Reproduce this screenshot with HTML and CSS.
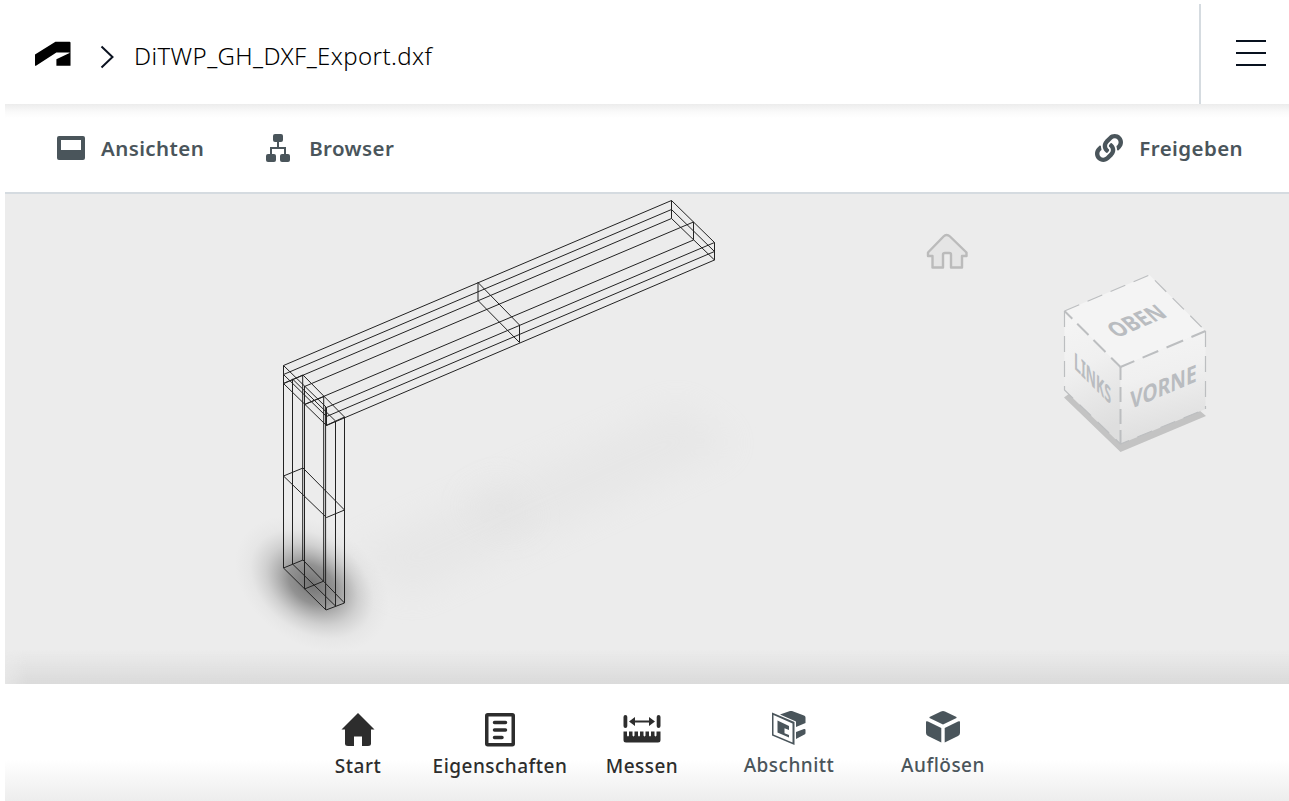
FILE: index.html
```html
<!DOCTYPE html>
<html lang="de">
<head>
<meta charset="utf-8">
<title>DiTWP_GH_DXF_Export.dxf</title>
<link rel="stylesheet" href="styles.css">
</head>
<body>
<div class="app">
  <header class="header">
    <svg class="logo" width="36" height="26" viewBox="0 0 37 26"><path d="M0 25V13.500L21 .5H35.500Q36.500 .5 36.500 1.500V25H22V18.500L35.500 12V11.500H22L1 25Z"/></svg>
    <svg class="chevron" width="14" height="24" viewBox="0 0 14 24"><path d="M1.500 1.500L12.500 12L1.500 22.500"/></svg>
    <h1 class="title">DiTWP_GH_DXF_Export.dxf</h1>
    <button class="menu" aria-label="Menü"><span class="bar"></span><span class="bar"></span><span class="bar"></span></button>
  </header>

  <nav class="toolbar">
    <button class="tool views">
      <svg width="28" height="24" viewBox="0 0 28 24"><path fill-rule="evenodd" d="M2 0H26Q28 0 28 2V22Q28 24 26 24H2Q0 24 0 22V2Q0 0 2 0ZM4 4V14H24V4Z"/></svg>
      <span>Ansichten</span>
    </button>
    <button class="tool browser">
      <svg width="24" height="28" viewBox="0 0 24 28"><rect x="7" y="0" width="10" height="8" rx="2"/><rect x="0" y="20" width="10" height="8" rx="2"/><rect x="14" y="20" width="10" height="8" rx="2"/><path class="wire" d="M12 8V14M5 21V14H19V21"/></svg>
      <span>Browser</span>
    </button>
    <button class="tool share">
      <svg width="28" height="28" viewBox="0 0 512 512"><path d="M326.612 185.391c59.747 59.809 58.927 155.698.36 214.590-.110.120-.240.250-.360.370l-67.200 67.200c-59.270 59.270-155.699 59.262-214.960 0-59.270-59.260-59.270-155.700 0-214.960l37.106-37.106c9.840-9.840 26.786-3.300 27.294 10.606.648 17.722 3.826 35.527 9.690 52.721 1.986 5.822.567 12.262-3.783 16.612l-13.087 13.087c-28.026 28.026-28.905 73.660-1.155 101.960 28.024 28.579 74.086 28.749 102.325.510l67.200-67.190c28.191-28.191 28.073-73.757 0-101.830-3.701-3.694-7.429-6.564-10.341-8.569a16.037 16.037 0 0 1-6.947-12.606c-.396-10.567 3.348-21.456 11.698-29.806l21.054-21.055c5.521-5.521 14.182-6.199 20.584-1.731a152.482 152.482 0 0 1 20.522 17.197zM467.547 44.449c-59.261-59.262-155.690-59.270-214.960 0l-67.200 67.200c-.120.120-.250.250-.360.370-58.566 58.892-59.387 154.781.360 214.590a152.454 152.454 0 0 0 20.521 17.196c6.402 4.468 15.064 3.789 20.584-1.731l21.054-21.055c8.350-8.350 12.094-19.239 11.698-29.806a16.037 16.037 0 0 0-6.947-12.606c-2.912-2.005-6.640-4.875-10.341-8.569-28.073-28.073-28.191-73.639 0-101.830l67.200-67.190c28.239-28.239 74.300-28.069 102.325.510 27.750 28.300 26.872 73.934-1.155 101.960l-13.087 13.087c-4.350 4.350-5.769 10.790-3.783 16.612 5.864 17.194 9.042 34.999 9.690 52.721.509 13.906 17.454 20.446 27.294 10.606l37.106-37.106c59.271-59.259 59.271-155.699.001-214.959z"/></svg>
      <span>Freigeben</span>
    </button>
  </nav>

  <main class="viewport">
    <svg class="scene" width="1284" height="490" viewBox="5 194 1284 490">
      <defs>
        <filter id="soft" x="-50%" y="-80%" width="200%" height="260%"><feGaussianBlur stdDeviation="17"/></filter>
        <radialGradient id="foot"><stop offset="0" stop-color="#666" stop-opacity=".9"/><stop offset=".3" stop-color="#6c6c6c" stop-opacity=".7"/><stop offset=".6" stop-color="#888" stop-opacity=".28"/><stop offset=".8" stop-color="#999" stop-opacity=".07"/><stop offset="1" stop-color="#aaa" stop-opacity="0"/></radialGradient>
        <linearGradient id="side" x1="0" y1="0" x2=".2" y2="1"><stop offset="0" stop-color="#f5f5f5"/><stop offset=".45" stop-color="#f0f0f0"/><stop offset="1" stop-color="#dedede"/></linearGradient>
      </defs>
      <path d="M345 555L680 405L735 445L410 595Z" fill="#dcdcdc" opacity=".3" filter="url(#soft)"/>
      <path d="M460 505L500 480L540 520L505 535Z" fill="#d0d0d0" opacity=".15" filter="url(#soft)"/>
      <ellipse cx="0" cy="0" rx="84" ry="60" transform="translate(312 584) rotate(34)" fill="url(#foot)"/>

      <g class="wireframe">
        <!-- beam, lengthwise edges -->
        <path d="M283.500 365.500L671.500 200.500M283.500 374.500L671.500 209.500M283.500 383.500L671.500 218.500M304.500 386.500L693.500 222M304.500 404.500L693.500 240M326.500 407.500L714.500 242.500M326.500 416.500L714.500 251.500M326.500 425.500L714.500 260"/>
        <!-- beam, end frames and middle section -->
        <path d="M671.500 218.500V200.500L714.500 242.500V260L671.500 218.500M671.500 209.500L714.500 251.500M693.500 222V240M478 300.500V282.500L519.500 325V342.500ZM283.500 365.500L326.500 407.500V425.500L283.500 383.500M283.500 374.500L326.500 416.500M304.500 386.500V404.500L324 396.500"/>
        <!-- column -->
        <path d="M283.500 383.500L303 375L344.500 417L326 425.500M292.500 379L335.500 421M283.500 476L303 468L344.500 510L326.500 517.500ZM283.500 568L303 560L344.500 603L326 610ZM292.500 564L335.500 606M304.500 589L324 581"/>
        <path d="M283.500 365.500V568M292.500 379V564M302.700 375V560M304.500 386V589M323.700 396V581M325.600 407V610M335.500 421V606M344.500 417V603"/>
      </g>

      <path class="home" d="M946.500 235Q948.500 235 950 236.500L966.500 252.500V256H962V267.500H951V254.500Q951 253 949.500 253H945Q943 253 943 254.500V267.500H932.500V256H928V252.500L943.500 236.500Q945 235 946.500 235Z"/>

      <g class="cube">
        <path d="M1064 397.500L1070 393L1120.500 440L1199 410L1206 416L1120.500 452Z" fill="#c3c3c3"/>
        <path d="M1064.500 311L1120.500 367V444L1064.500 390Z" fill="url(#side)"/>
        <path d="M1120.500 367L1205.500 331V409L1120.500 444Z" fill="url(#side)"/>
        <path d="M1064.500 311L1149.500 275L1205.500 331L1120.500 367Z" fill="#f4f4f4"/>
        <path class="edge" stroke-width="1.200" stroke-dasharray="16 9" d="M1064.500 311L1149.500 275L1205.500 331M1205.500 331V409M1064.500 311V390L1120.500 444L1205.500 409"/>
        <path class="edge" stroke-width="2" stroke-dasharray="11 7 16 7 17 8 14 0" d="M1064.500 311L1120.500 367"/>
        <path class="edge" stroke-width="2" stroke-dasharray="15 9 17 9 18 9 16 0" d="M1120.500 367L1205.500 331"/>
        <path class="edge" stroke-width="2" stroke-dasharray="13 7 15 7 15 6 16 0" d="M1120.500 367V444"/>
        <text transform="matrix(.85 -.36 .56 .56 1136.500 321)" y="11" font-size="31" textLength="61" lengthAdjust="spacingAndGlyphs">OBEN</text>
        <text transform="matrix(.56 .56 0 .79 1092.500 378.500)" y="10.500" font-size="30" textLength="66" lengthAdjust="spacingAndGlyphs">LINKS</text>
        <text transform="matrix(.85 -.36 0 .79 1163.500 387)" y="10.500" font-size="30" textLength="78" lengthAdjust="spacingAndGlyphs">VORNE</text>
      </g>
    </svg>
    <div class="fade"></div>
  </main>

  <footer class="dock">
    <button class="action">
      <svg width="34" height="34" viewBox="0 0 34 34"><path d="M17 0L33.500 16.500H30V30.500Q30 33 27 33H21V23.500H13V33H7Q4 33 4 30.500V16.500H.5Z"/></svg>
      <span>Start</span>
    </button>
    <button class="action">
      <svg width="30" height="34" viewBox="0 0 30 34"><rect x="1.750" y="1.750" width="26.500" height="30" rx="1" fill="none" stroke="currentColor" stroke-width="3.500"/><path class="rule" d="M9.500 9.500H20.500M9.500 17H20.500M9.500 24.500H17"/></svg>
      <span>Eigenschaften</span>
    </button>
    <button class="action">
      <svg width="38" height="34" viewBox="0 0 38 34"><rect x=".5" y="2" width="3.800" height="13" rx="1.900"/><rect x="33.700" y="2" width="3.800" height="13" rx="1.900"/><path d="M6 8.500L12 4V7.500H26V4L32 8.500L26 13V9.500H12V13ZM.5 18.500H4V22.500Q5 24.500 6 22.500V18.500H9.500V22.500Q10.500 24.500 11.500 22.500V18.500H15V22.500Q16 24.500 17 22.500V18.500H20.500V22.500Q21.500 24.500 22.500 22.500V18.500H26V22.500Q27 24.500 28 22.500V18.500H31.500V22.500Q32.500 24.500 33.500 22.500V18.500H37.500V27Q37.500 29.500 35 29.500H3Q.5 29.500 .5 27Z"/></svg>
      <span>Messen</span>
    </button>
    <button class="action slate">
      <svg width="34" height="34" viewBox="0 0 34 34"><path fill-rule="evenodd" d="M0 1.500L22.500 11V34L0 24.500ZM1.500 4V23.500L20.500 31.500V12.500Z"/><path d="M5.500 9.500L17 15V19L12.500 17.200V22.300L17 24V26.500L5.500 21.500Z"/><path d="M8 3.500L18 0Q19 -.3 20 0L32 4.500Q33.500 5 33.500 6.500V12L24 16V10.500ZM24 21L32 18Q33.500 17.500 33.500 19V22Q33.500 23 32.500 23.500L24 28Z"/></svg>
      <span>Abschnitt</span>
    </button>
    <button class="action slate">
      <svg width="34" height="34" viewBox="0 0 34 34"><path d="M3.500 6L15 .5Q17 -.3 19 .5L30.500 6V7L17 13.500L3.500 7ZM0 10.500Q1 10 2 10.500L15.300 17V31.500L2 25Q0 24 0 22ZM34 10.500Q33 10 32 10.500L18.700 17V31.500L32 25Q34 24 34 22Z"/></svg>
      <span>Auflösen</span>
    </button>
  </footer>
</div>
</body>
</html>
```
FILE: styles.css
```css
* { box-sizing: border-box; }
body {
  margin: 0;
  background: #fff;
  font-family: "Noto Sans", "Open Sans", sans-serif;
  overflow: hidden;
}
button {
  margin: 0;
  padding: 0;
  border: 0;
  background: none;
  font: inherit;
  color: inherit;
  letter-spacing: inherit;
}
svg { display: block; flex: none; fill: currentColor; }
.app {
  width: 1284px;
  height: 797px;
  margin: 4px 0 0 5px;
  display: grid;
  grid-template-rows: 100px 90px 490px 117px;
}
.header {
  display: flex;
  align-items: center;
  padding-left: 30px;
  color: #000;
}
.logo { margin-bottom: 1px; }
.chevron {
  margin: 5px 0 0 29px;
  fill: none;
  stroke: #0b1220;
  stroke-width: 2;
}
.title {
  flex: 1;
  margin: 4px 0 0 20px;
  font-size: 24px;
  font-weight: 300;
  line-height: 32px;
  letter-spacing: .4px;
}
.menu {
  width: 90px;
  height: 100px;
  border-left: 2px solid #d5dbe0;
  display: flex;
  flex-direction: column;
  gap: 10px;
  padding: 36px 0 0 35px;
}
.bar { width: 30px; height: 2px; background: #08111f; }
.toolbar {
  display: flex;
  align-items: center;
  border-bottom: 2px solid #d5dbe0;
  color: #4a555b;
  font-size: 20.500px;
  font-weight: 600;
  line-height: 28px;
  letter-spacing: .4px;
  padding: 0 46px 0 52px;
  background: linear-gradient(#ececec, #fafafa 8px, #fff 14px);
}
.tool { display: flex; align-items: center; gap: 16px; }
.browser { margin-left: 62px; gap: 19px; }
.share { margin-left: auto; gap: 16px; }
.wire { fill: none; stroke: currentColor; stroke-width: 2; }
.viewport {
  background: #ececec;
  position: relative;
}
.fade {
  position: absolute;
  inset: auto 0 0 0;
  height: 34px;
  background: linear-gradient(#dadada00, #dadada);
  mask-image: linear-gradient(90deg, #0006, #000 22px);
}
.wireframe path { fill: none; stroke: #222; stroke-width: 1; }
.home { fill: #e5e5e5; stroke: #bbb; stroke-width: 2.400; stroke-linejoin: round; }
.edge { fill: none; stroke: #bcbec0; }
.cube text { fill: #b9bcc0; font-weight: 700; text-anchor: middle; }
.dock {
  display: grid;
  grid-template-columns: 142px 142px 142px 152px 156px;
  padding: 29px 0 0 282px;
  align-items: start;
  background: linear-gradient(#fff 65%, #ededed);
  color: #2d2d2d;
  font-size: 19px;
  font-weight: 500;
  line-height: 26px;
  letter-spacing: .48px;
}
.action {
  display: flex;
  flex-direction: column;
  align-items: center;
  gap: 6px;
}
.slate { color: #4a555b; margin-top: -2px; gap: 7px; }
.rule { fill: none; stroke: currentColor; stroke-width: 3.500; stroke-linecap: round; }
```
